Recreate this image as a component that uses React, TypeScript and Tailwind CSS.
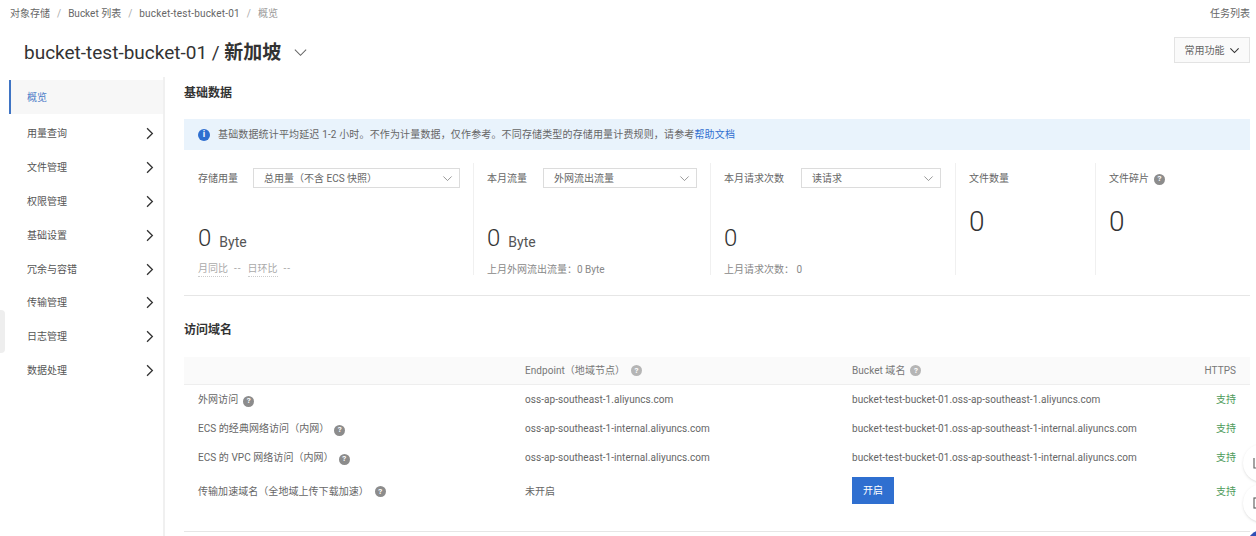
import React from "react";

const Chevron = ({ className, dir = "down", thin }: { className: string; dir?: "down" | "right"; thin?: boolean }) => (
  <svg viewBox="0 0 16 16" fill="none" stroke="currentColor" strokeWidth={thin ? 1.1 : 1.6} className={className}>
    {dir === "down" ? <path d="M2 5l6 6 6-6" /> : <path d="M5 1.5l6.5 6.5L5 14.5" />}
  </svg>
);

const Help = ({ light }: { light?: boolean }) => (
  <span
    className={`inline-flex h-[11px] w-[11px] shrink-0 items-center justify-center rounded-full text-[8px] font-bold leading-none text-white ${
      light ? "bg-[#b5b5b5]" : "bg-[#8c8c8c]"
    }`}
  >
    ?
  </span>
);

const Select = ({ value, className }: { value: string; className: string }) => (
  <div className={`flex h-5 items-center justify-between border border-[#dcdcdc] pl-[10px] pr-[6px] text-[#666] ${className}`}>
    <span>{value}</span>
    <Chevron thin className="h-[11px] w-[11px] text-[#777]" />
  </div>
);

const navItems = ["用量查询", "文件管理", "权限管理", "基础设置", "冗余与容错", "传输管理", "日志管理", "数据处理"];

const rows = [
  { name: "外网访问", gap: "ml-[3px]", endpoint: "oss-ap-southeast-1.aliyuncs.com", domain: "bucket-test-bucket-01.oss-ap-southeast-1.aliyuncs.com" },
  { name: "ECS 的经典网络访问（内网）", gap: "ml-[3px]", endpoint: "oss-ap-southeast-1-internal.aliyuncs.com", domain: "bucket-test-bucket-01.oss-ap-southeast-1-internal.aliyuncs.com" },
  { name: "ECS 的 VPC 网络访问（内网）", gap: "ml-[3px]", endpoint: "oss-ap-southeast-1-internal.aliyuncs.com", domain: "bucket-test-bucket-01.oss-ap-southeast-1-internal.aliyuncs.com" },
];

const tableGrid = "grid grid-cols-[327px_327px_1fr_auto] items-center px-[14px]";

export default function App() {
  return (
    <div className="relative h-[536px] w-[1256px] overflow-hidden bg-white font-['Roboto','Noto_Sans_CJK_SC',sans-serif] text-[10px] text-[#666]">
      {/* page header */}
      <div className="flex h-[27px] items-center justify-between pl-[10px] pr-[6px]">
        <div className="flex items-center gap-[7px] text-[#666]">
          <span>对象存储</span>
          <span className="text-[#aaa]">/</span>
          <span>Bucket 列表</span>
          <span className="text-[#aaa]">/</span>
          <span className="tracking-[0.2px]">bucket-test-bucket-01</span>
          <span className="text-[#aaa]">/</span>
          <span className="text-[#999]">概览</span>
        </div>
        <span>任务列表</span>
      </div>
      <div className="flex h-[50px] items-center justify-between pl-[24px] pr-[6px]">
        <div className="flex items-center gap-[12px]">
          <h1 className="text-[19px] font-normal leading-none text-[#333]">
            bucket-test-bucket-01 / <span className="font-bold">新加坡</span>
          </h1>
          <Chevron thin className="h-[15px] w-[15px] text-[#666]" />
        </div>
        <button className="mb-[4px] flex h-[26px] w-[76px] items-center justify-center gap-[4px] border border-[#e3e3e3] bg-[#fafafa] text-[#666]">
          常用功能
          <Chevron className="h-[11px] w-[11px] text-[#333]" />
        </button>
      </div>

      <div className="flex">
        {/* side nav */}
        <aside className="ml-[9px] h-[459px] w-[156px] shrink-0 border-r-2 border-[#f0f0f0]">
          <div className="mt-[3px] flex h-[34px] items-center border-l-2 border-[#3f74c4] bg-[#f7f7f7] pl-[16px] text-[#4d7cc7]">概览</div>
          <ul className="mt-[3px]">
            {navItems.map((item) => (
              <li key={item} className="flex h-[33.8px] items-center justify-between pl-[18px] pr-[7px] text-[#555]">
                {item}
                <Chevron dir="right" className="h-[13px] w-[13px] text-[#333]" />
              </li>
            ))}
          </ul>
        </aside>

        <main className="ml-[19px] w-[1066px] shrink-0">
          <h2 className="mt-[8px] text-[12px] font-bold leading-[17px] text-[#333]">基础数据</h2>

          <div className="mt-[17px] flex h-[31px] items-center bg-[#e9f3fc] pl-[14px] text-[#666]">
            <span className="flex h-[12px] w-[12px] items-center justify-center rounded-full bg-[#2f6fd0] text-[9px] font-bold leading-none text-white">i</span>
            <span className="ml-[8px] tracking-[0.15px]">
              基础数据统计平均延迟 1-2 小时。不作为计量数据，仅作参考。不同存储类型的存储用量计费规则，请参考
              <span className="text-[#2f6fd0]">帮助文档</span>
            </span>
          </div>

          {/* stats */}
          <div className="mt-[13px] flex h-[112px]">
            <div className="flex w-[290px] flex-col border-r border-[#f0f0f0] pl-[14px] pt-[5px]">
              <div className="flex items-center">
                <span className="w-[55px]">存储用量</span>
                <Select value="总用量（不含 ECS 快照）" className="w-[207px]" />
              </div>
              <div className="mt-[33px] flex items-baseline gap-[8px] text-[#333]">
                <span className="text-[24px] font-light leading-[34px]">0</span>
                <span className="relative top-[1px] text-[14px] text-[#555]">Byte</span>
              </div>
              <div className="mt-[6px] flex gap-[6px] text-[#aaa]">
                <span className="border-b border-dotted border-[#ccc]">月同比</span>
                <span className="tracking-[1px]">--</span>
                <span className="border-b border-dotted border-[#ccc]">日环比</span>
                <span className="tracking-[1px]">--</span>
              </div>
            </div>
            <div className="flex w-[237px] flex-col border-r border-[#f0f0f0] pl-[13px] pt-[5px]">
              <div className="flex items-center">
                <span className="w-[56px]">本月流量</span>
                <Select value="外网流出流量" className="w-[154px]" />
              </div>
              <div className="mt-[33px] flex items-baseline gap-[8px] text-[#333]">
                <span className="text-[24px] font-light leading-[34px]">0</span>
                <span className="relative top-[1px] text-[14px] text-[#555]">Byte</span>
              </div>
              <div className="mt-[7px] text-[#888]">上月外网流出流量：0 Byte</div>
            </div>
            <div className="flex w-[245px] flex-col border-r border-[#f0f0f0] pl-[13px] pt-[5px]">
              <div className="flex items-center">
                <span className="w-[77px]">本月请求次数</span>
                <Select value="读请求" className="w-[140px]" />
              </div>
              <div className="mt-[33px] text-[24px] font-light leading-[34px] text-[#333]">0</div>
              <div className="mt-[7px] text-[#888]">上月请求次数： 0</div>
            </div>
            <div className="flex w-[140px] flex-col border-r border-[#f0f0f0] pl-[13px] pt-[6px]">
              <div className="leading-5">文件数量</div>
              <div className="mt-[14px] text-[28px] font-light leading-[38px] text-[#333]">0</div>
            </div>
            <div className="flex flex-col pl-[13px] pt-[6px]">
              <div className="flex items-center gap-[5px] leading-5">
                文件碎片 <Help />
              </div>
              <div className="mt-[14px] text-[28px] font-light leading-[38px] text-[#333]">0</div>
            </div>
          </div>

          <hr className="mt-[20px] border-t border-[#e6e6e6]" />

          <h2 className="mt-[26px] text-[12px] font-bold leading-[17px] text-[#333]">访问域名</h2>

          {/* domain table */}
          <div className="mt-[18px] tracking-[0.05px]">
            <div className={`${tableGrid} h-[28px] border-b border-[#eee] bg-[#fafafa] text-[#777]`}>
              <span />
              <span className="flex items-center gap-[6px]">
                Endpoint（地域节点） <Help light />
              </span>
              <span className="flex items-center gap-[5px]">
                Bucket 域名 <Help light />
              </span>
              <span>HTTPS</span>
            </div>
            {rows.map((row) => (
              <div key={row.name} className={`${tableGrid} h-[29px]`}>
                <span className="flex items-center gap-[2px]">
                  {row.name}
                  <span className={row.gap}>
                    <Help />
                  </span>
                </span>
                <span>{row.endpoint}</span>
                <span>{row.domain}</span>
                <span className="text-right text-[#4c9a5a]">支持</span>
              </div>
            ))}
            <div className={`${tableGrid} h-[39px]`}>
              <span className="flex items-center gap-[6px]">
                传输加速域名（全地域上传下载加速） <Help />
              </span>
              <span>未开启</span>
              <span>
                <button className="mb-[2px] h-[27px] w-[42px] bg-[#2f6fd0] text-white">开启</button>
              </span>
              <span className="text-right text-[#4c9a5a]">支持</span>
            </div>
          </div>

          <hr className="mt-[20px] border-t border-[#e6e6e6]" />
        </main>
      </div>

      {/* floating bits over the page */}
      <div className="absolute left-0 top-[310px] h-[43px] w-[5px] rounded-r bg-[#eeeeee]" />
      <div className="absolute left-[1243px] top-[444px] flex h-[38px] w-[38px] items-center rounded-full bg-white pl-[10px] shadow">
        <svg viewBox="0 0 12 12" fill="none" stroke="#666" strokeWidth="1.2" className="h-[12px] w-[12px]">
          <path d="M1 1v10h10M4 1v7h7" />
        </svg>
      </div>
      <div className="absolute left-[1243px] top-[484px] flex h-[38px] w-[38px] items-center rounded-full bg-white pl-[10px] shadow">
        <svg viewBox="0 0 12 12" fill="none" stroke="#666" strokeWidth="1.2" className="h-[12px] w-[12px]">
          <rect x="1" y="1" width="10" height="10" />
          <path d="M3 6h5" />
        </svg>
      </div>
      <div className="absolute left-[1247px] top-[530px] h-[30px] w-[30px] rounded-full bg-[#2f4fb5]" />
    </div>
  );
}
